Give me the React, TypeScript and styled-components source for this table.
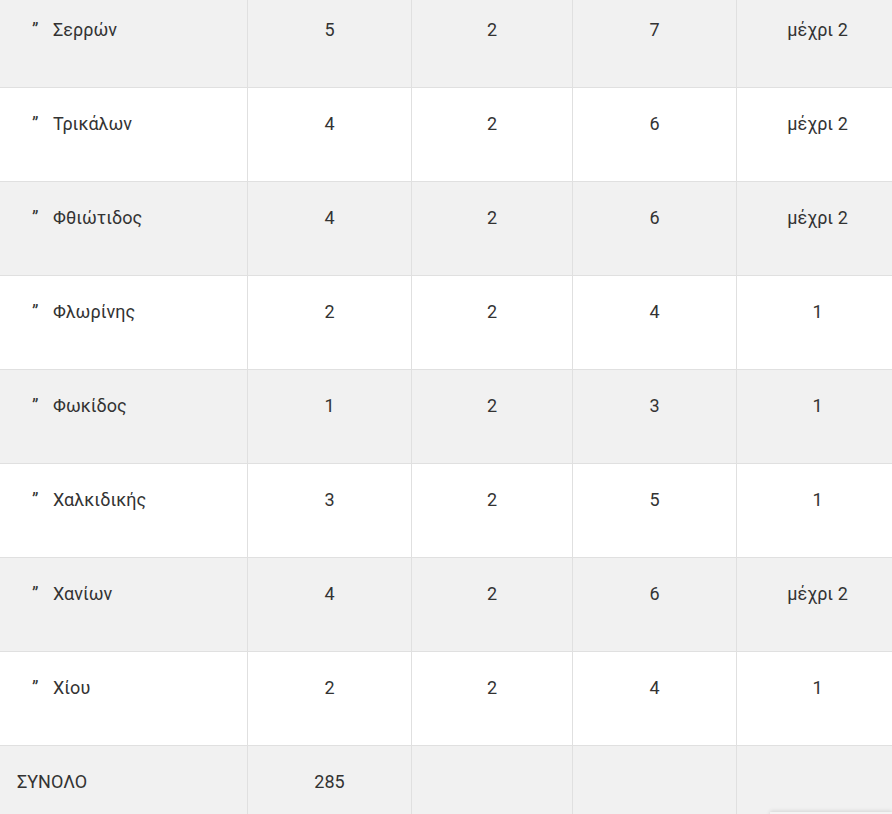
import React from "react"
import styled, { createGlobalStyle } from "styled-components"

const GlobalStyle = createGlobalStyle`
  html, body {
    margin: 0;
    padding: 0;
    background: #ffffff;
    overflow: hidden;
  }
  body {
    font-family: "Roboto", "Noto Sans", sans-serif;
    color: #333333;
  }
`

const Page = styled.div`
  width: 892px;
  height: 814px;
  overflow: hidden;
  position: relative;
`

const Table = styled.table`
  width: 898px;
  margin-top: -6px;
  border-collapse: separate;
  border-spacing: 0;
  table-layout: fixed;
  font-size: 18px;
  line-height: 27px;
`

const Row = styled.tr<{ $shaded: boolean }>`
  background: ${(p) => (p.$shaded ? "#f1f1f1" : "#ffffff")};
`

const Cell = styled.td<{ $center?: boolean; $last?: boolean }>`
  padding: 22px 17px 44px;
  height: 27px;
  vertical-align: top;
  text-align: ${(p) => (p.$center ? "center" : "left")};
  border-bottom: 1px solid #e0e0e0;
  border-right: ${(p) => (p.$last ? "none" : "1px solid #e0e0e0")};
  white-space: nowrap;
`

const Ditto = styled.span`
  display: inline-block;
  width: 21px;
  margin-left: 15px;
`

const BottomShadow = styled.div`
  position: absolute;
  left: 770px;
  right: 0;
  top: 812px;
  height: 40px;
  background: #f4f4f4;
  box-shadow: 0 -1px 4px rgba(0, 0, 0, 0.12);
`

type Prefecture = {
  name: string
  a: string
  b: string
  total: string
  extra: string
}

const rows: Prefecture[] = [
  { name: "Σερρών", a: "5", b: "2", total: "7", extra: "μέχρι 2" },
  { name: "Τρικάλων", a: "4", b: "2", total: "6", extra: "μέχρι 2" },
  { name: "Φθιώτιδος", a: "4", b: "2", total: "6", extra: "μέχρι 2" },
  { name: "Φλωρίνης", a: "2", b: "2", total: "4", extra: "1" },
  { name: "Φωκίδος", a: "1", b: "2", total: "3", extra: "1" },
  { name: "Χαλκιδικής", a: "3", b: "2", total: "5", extra: "1" },
  { name: "Χανίων", a: "4", b: "2", total: "6", extra: "μέχρι 2" },
  { name: "Χίου", a: "2", b: "2", total: "4", extra: "1" },
]

const App: React.FC = () => {
  return (
    <>
      <GlobalStyle />
      <Page>
        <Table>
          <colgroup>
            <col style={{ width: 248 }} />
            <col style={{ width: 164 }} />
            <col style={{ width: 161 }} />
            <col style={{ width: 164 }} />
            <col style={{ width: 161 }} />
          </colgroup>
          <tbody>
            {rows.map((r, i) => (
              <Row key={r.name} $shaded={i % 2 === 0}>
                <Cell>
                  <Ditto>”</Ditto>
                  {r.name}
                </Cell>
                <Cell $center>{r.a}</Cell>
                <Cell $center>{r.b}</Cell>
                <Cell $center>{r.total}</Cell>
                <Cell $center $last>
                  {r.extra}
                </Cell>
              </Row>
            ))}
            <Row $shaded>
              <Cell>ΣΥΝΟΛΟ</Cell>
              <Cell $center>285</Cell>
              <Cell $center></Cell>
              <Cell $center></Cell>
              <Cell $center $last></Cell>
            </Row>
          </tbody>
        </Table>
        <BottomShadow />
      </Page>
    </>
  )
}

export default App
